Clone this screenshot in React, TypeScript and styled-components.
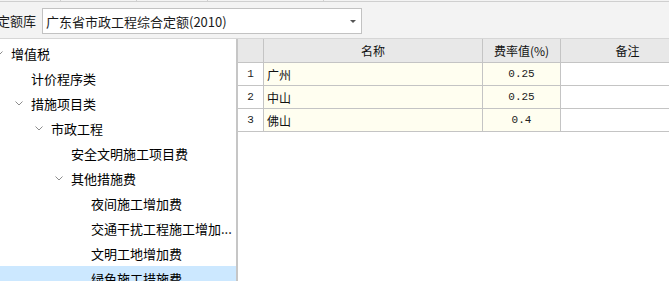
import styled, { createGlobalStyle } from 'styled-components';

const GlobalStyle = createGlobalStyle`
    html, body {
        margin: 0;
        padding: 0;
        background: #ffffff;
    }
    body {
        font-family: 'Noto Sans CJK SC', 'Noto Sans', sans-serif;
        color: #000;
    }
`;

type TreeNode = { label: string; level: number; expandable?: boolean; selected?: boolean };

const TREE: TreeNode[] = [
    { label: '增值税', level: 0, expandable: true },
    { label: '计价程序类', level: 1 },
    { label: '措施项目类', level: 1, expandable: true },
    { label: '市政工程', level: 2, expandable: true },
    { label: '安全文明施工项目费', level: 3 },
    { label: '其他措施费', level: 3, expandable: true },
    { label: '夜间施工增加费', level: 4 },
    { label: '交通干扰工程施工增加...', level: 4 },
    { label: '文明工地增加费', level: 4 },
    { label: '绿色施工措施费', level: 4, selected: true },
];

const ROWS = [
    { no: 1, name: '广州', rate: '0.25' },
    { no: 2, name: '中山', rate: '0.25' },
    { no: 3, name: '佛山', rate: '0.4' },
];

// 상단 탭 영역의 구분선 간격
const TABS = [60, 75, 70, 115];

const App = () => {
    return (
        <>
            <GlobalStyle />
            <Page>
                <TabStrip>
                    {TABS.map((w, i) => (
                        <Tab key={i} $width={w} />
                    ))}
                </TabStrip>
                <Toolbar>
                    <Label>定额库</Label>
                    <Combo>
                        <ComboText>广东省市政工程综合定额(2010)</ComboText>
                        <Caret />
                    </Combo>
                </Toolbar>
                <Body>
                    <TreePanel>
                        {TREE.map((node) => (
                            <TreeRow key={node.label} $level={node.level} $selected={node.selected}>
                                <Toggle>
                                    {node.expandable && (
                                        <svg width="8" height="5" viewBox="0 0 8 5">
                                            <polyline
                                                points="0.5,0.5 4,4 7.5,0.5"
                                                fill="none"
                                                stroke="#8c8c8c"
                                                strokeWidth="1"
                                            />
                                        </svg>
                                    )}
                                </Toggle>
                                <TreeLabel>{node.label}</TreeLabel>
                            </TreeRow>
                        ))}
                    </TreePanel>
                    <GridPanel>
                        <GridRow $header>
                            <NumCell $header />
                            <Cell $header $align="center">名称</Cell>
                            <Cell $header $align="center">费率值(%)</Cell>
                            <Cell $header $align="center">备注</Cell>
                        </GridRow>
                        {ROWS.map((row) => (
                            <GridRow key={row.no}>
                                <NumCell>{row.no}</NumCell>
                                <Cell $tint>{row.name}</Cell>
                                <Cell $tint $align="center">
                                    <NumberText>{row.rate}</NumberText>
                                </Cell>
                                <Cell />
                            </GridRow>
                        ))}
                    </GridPanel>
                </Body>
            </Page>
        </>
    );
};

const Page = styled.div`
    display: flex;
    flex-direction: column;
    width: 669px;
    height: 281px;
    overflow: hidden;
    background: #ffffff;
`;

const TabStrip = styled.div`
    display: flex;
    height: 1px;
    background: #f3f3f3;
    border-bottom: 1px solid #cfcfcf;
`;

const Tab = styled.div<{ $width: number }>`
    width: ${(p) => p.$width}px;
    border-right: 1px solid #cfcfcf;
`;

const Toolbar = styled.div`
    display: flex;
    align-items: center;
    gap: 6px;
    height: 36px;
    background: #f3f3f3;
    border-bottom: 1px solid #d6d6d6;
`;

const Label = styled.span`
    margin-left: -3px;
    font-size: 13px;
    color: #1a1a1a;
    white-space: nowrap;
`;

const Combo = styled.div`
    display: flex;
    align-items: center;
    justify-content: space-between;
    width: 310px;
    height: 24px;
    padding: 0 5px 0 3px;
    box-sizing: content-box;
    background: #ffffff;
    border: 1px solid #c2c2c2;
    margin-top: 2px;
`;

const ComboText = styled.span`
    font-size: 13px;
    color: #1a1a1a;
    white-space: nowrap;
`;

const Caret = styled.span`
    width: 0;
    height: 0;
    border-left: 3.5px solid transparent;
    border-right: 3.5px solid transparent;
    border-top: 3.5px solid #555;
    margin-top: 1px;
`;

const Body = styled.div`
    display: flex;
    flex: 1;
    min-height: 0;
`;

const TreePanel = styled.div`
    width: 236px;
    flex-shrink: 0;
    padding-top: 2px;
    overflow: hidden;
    background: #ffffff;
    border-right: 2px solid #c6c6c6;
`;

const TreeRow = styled.div<{ $level: number; $selected?: boolean }>`
    display: flex;
    align-items: center;
    height: 25px;
    padding-left: ${(p) => p.$level * 20}px;
    background: ${(p) => (p.$selected ? '#cce8ff' : 'transparent')};
`;

const Toggle = styled.span`
    display: flex;
    align-items: center;
    width: 11px;
    flex-shrink: 0;
    & > svg {
        margin-left: -5px;
        margin-top: -1px;
    }
`;

const TreeLabel = styled.span`
    font-size: 13px;
    line-height: 25px;
    white-space: nowrap;
    color: #000;
`;

const GridPanel = styled.div`
    flex: 1;
    overflow: hidden;
    background: #ffffff;
`;

const GridRow = styled.div<{ $header?: boolean }>`
    display: grid;
    grid-template-columns: 26px 219px 78px 134px;
    height: ${(p) => (p.$header ? 24 : 23)}px;
    width: 457px;
`;

const NumCell = styled.div<{ $header?: boolean }>`
    display: flex;
    align-items: center;
    justify-content: center;
    font-family: 'Liberation Mono', 'DejaVu Sans Mono', monospace;
    font-size: 11px;
    color: #222;
    background: ${(p) => (p.$header ? '#e8e8e8' : '#ffffff')};
    border-right: 1px solid #c4c4c4;
    border-bottom: 1px solid #c4c4c4;
`;

const Cell = styled.div<{ $header?: boolean; $tint?: boolean; $align?: 'left' | 'center' }>`
    display: flex;
    align-items: center;
    justify-content: ${(p) => (p.$align === 'center' ? 'center' : 'flex-start')};
    padding-left: ${(p) => (p.$align === 'center' ? 0 : 3)}px;
    font-size: 12px;
    color: #111;
    white-space: nowrap;
    background: ${(p) => (p.$header ? '#e8e8e8' : p.$tint ? '#fffef0' : '#ffffff')};
    border-right: 1px solid #c4c4c4;
    border-bottom: 1px solid #c4c4c4;
`;

const NumberText = styled.span`
    font-family: 'Liberation Mono', 'DejaVu Sans Mono', monospace;
    font-size: 11px;
    color: #222;
`;

export default App;
